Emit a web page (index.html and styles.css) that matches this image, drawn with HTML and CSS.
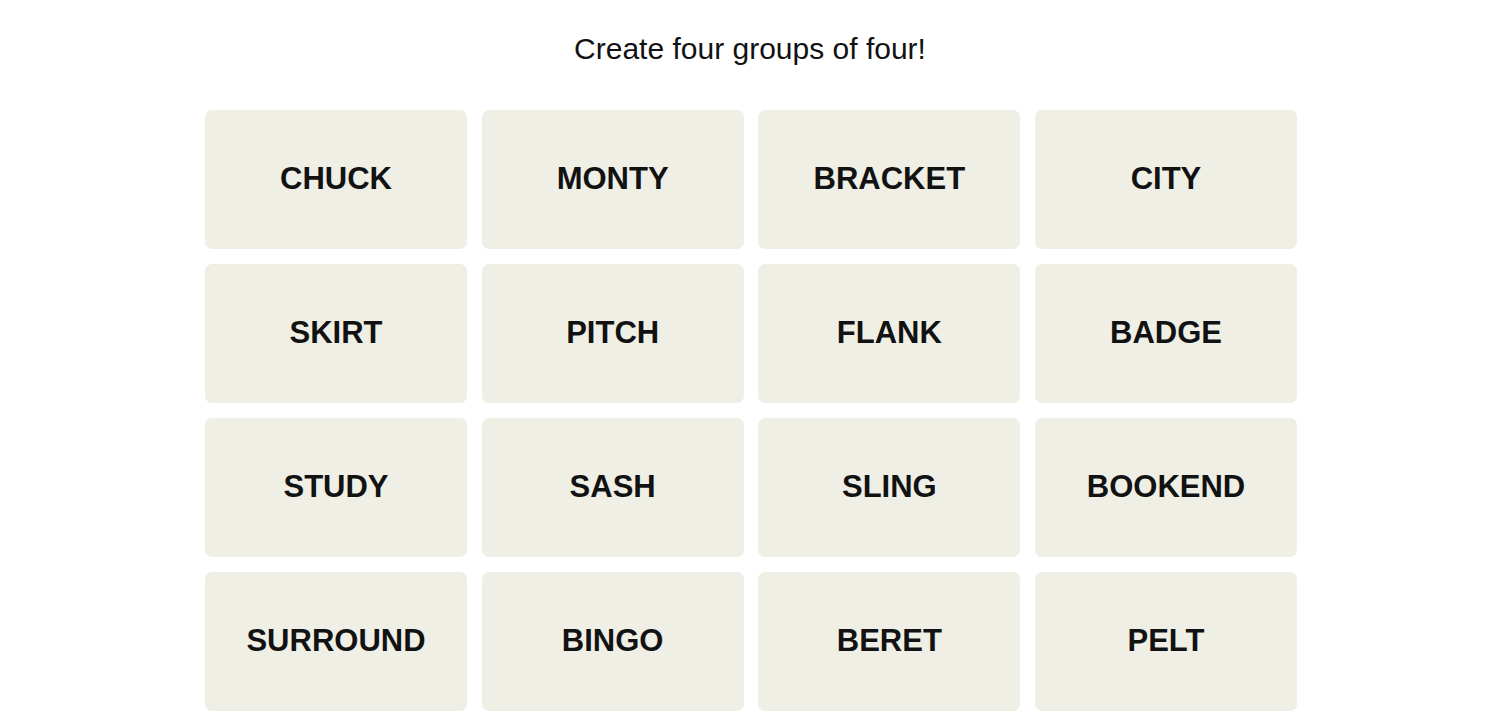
FILE: index.html
```html
<!DOCTYPE html>
<html lang="en">
<head>
<meta charset="utf-8">
<title>Connections</title>
<link rel="stylesheet" href="styles.css">
</head>
<body>
<main class="game">
  <p class="prompt">Create four groups of four!</p>
  <div class="board">
    <button class="tile">CHUCK</button>
    <button class="tile">MONTY</button>
    <button class="tile">BRACKET</button>
    <button class="tile">CITY</button>
    <button class="tile">SKIRT</button>
    <button class="tile">PITCH</button>
    <button class="tile">FLANK</button>
    <button class="tile">BADGE</button>
    <button class="tile">STUDY</button>
    <button class="tile">SASH</button>
    <button class="tile">SLING</button>
    <button class="tile">BOOKEND</button>
    <button class="tile">SURROUND</button>
    <button class="tile">BINGO</button>
    <button class="tile">BERET</button>
    <button class="tile">PELT</button>
  </div>
</main>
</body>
</html>
```
FILE: styles.css
```css
html, body {
  margin: 0;
  padding: 0;
  background: #ffffff;
}

body {
  font-family: "Liberation Sans", Arial, sans-serif;
  color: #121212;
}

.game {
  display: flex;
  flex-direction: column;
  align-items: center;
}

.prompt {
  margin: 0;
  height: 110px;
  padding-top: 33px;
  box-sizing: border-box;
  font-size: 30px;
  line-height: 32px;
  font-weight: 400;
  text-align: center;
}

.board {
  width: 1092px;
  margin-left: 2px;
  display: grid;
  grid-template-columns: repeat(4, 1fr);
  grid-auto-rows: 139px;
  column-gap: 14.67px;
  row-gap: 15px;
}

.tile {
  border: none;
  border-radius: 7px;
  background: #efefe6;
  color: #121212;
  font-family: "Liberation Sans", Arial, sans-serif;
  font-weight: 700;
  font-size: 31px;
  letter-spacing: 0;
  display: flex;
  align-items: center;
  justify-content: center;
  padding: 0 0 2px;
  cursor: pointer;
}
```
